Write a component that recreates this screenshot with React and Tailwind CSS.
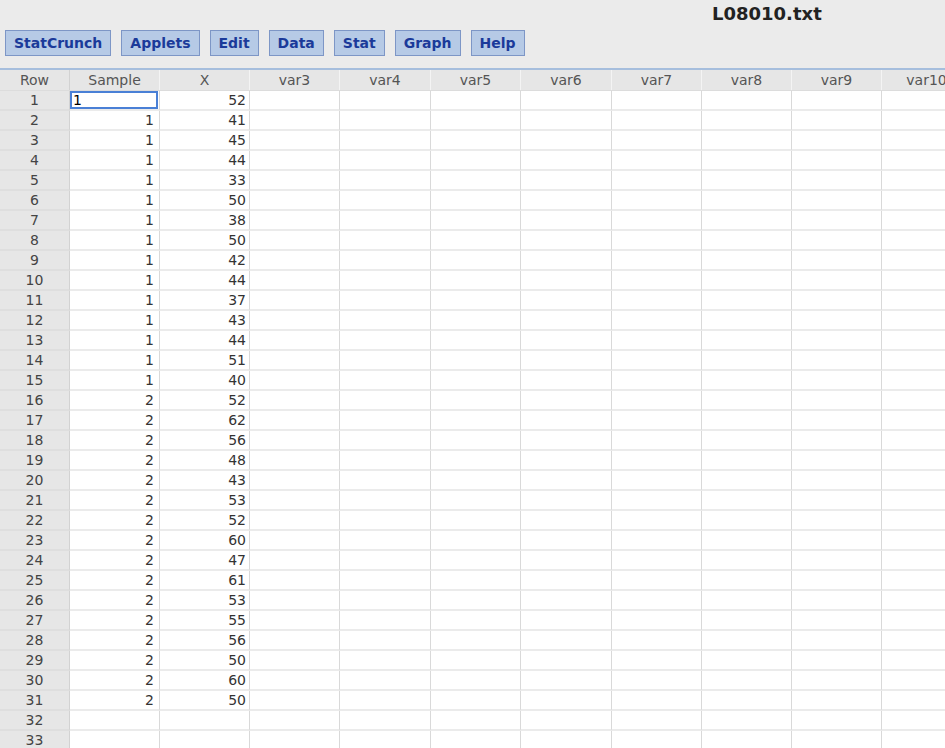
const menus = ["StatCrunch", "Applets", "Edit", "Data", "Stat", "Graph", "Help"];

const columns = [
  { name: "Row", width: "w-[70px]" },
  { name: "Sample", width: "w-[90px]" },
  { name: "X", width: "w-[90px]" },
  { name: "var3", width: "w-[90px]" },
  { name: "var4", width: "w-[91px]" },
  { name: "var5", width: "w-[90px]" },
  { name: "var6", width: "w-[91px]" },
  { name: "var7", width: "w-[90px]" },
  { name: "var8", width: "w-[90px]" },
  { name: "var9", width: "w-[90px]" },
  { name: "var10", width: "w-[90px]" },
];

const sample = [
  1, 1, 1, 1, 1, 1, 1, 1, 1, 1, 1, 1, 1, 1, 1,
  2, 2, 2, 2, 2, 2, 2, 2, 2, 2, 2, 2, 2, 2, 2, 2,
];

const xs = [
  52, 41, 45, 44, 33, 50, 38, 50, 42, 44, 37, 43, 44, 51, 40,
  52, 62, 56, 48, 43, 53, 52, 60, 47, 61, 53, 55, 56, 50, 60, 50,
];

const rows = Array.from({ length: 33 }, (_, i) => ({
  n: i + 1,
  sample: sample[i],
  x: xs[i],
}));

function MenuButton({ label }) {
  return (
    <button className="h-[26px] px-[8px] border border-[#7d96c6] bg-[#b6cae6] text-[#1b3a9a] font-bold text-[14px] leading-none">
      {label}
    </button>
  );
}

export default function App() {
  return (
    <div className="w-[945px] h-[748px] overflow-hidden bg-white font-['DejaVu_Sans',Verdana,sans-serif]">
      {/* toolbar */}
      <div className="h-[68px] bg-[#ebebeb] flex flex-col">
        <div className="h-[30px] flex items-start pt-[3px] pl-[712px]">
          <span className="text-[18px] font-bold text-[#222] leading-tight whitespace-nowrap">
            L08010.txt
          </span>
        </div>
        <div className="flex gap-[10px] pl-[5px]">
          {menus.map((m) => (
            <MenuButton key={m} label={m} />
          ))}
        </div>
      </div>
      <div className="h-[2px] bg-[#a6bedd]" />

      {/* grid */}
      <div className="flex h-[21px] bg-[#e6e6e6] text-[14px] text-[#555] border-b border-[#dcdcdc]">
        {columns.map((c, i) => (
          <div
            key={c.name}
            className={`${c.width} shrink-0 flex items-center justify-center whitespace-nowrap ${
              i === 0 ? "border-r border-[#d2d2d2]" : "border-r border-[#f4f4f4]"
            }`}
          >
            {c.name}
          </div>
        ))}
      </div>

      {rows.map((r) => (
        <div key={r.n} className="flex h-[20px] text-[14px] text-[#333]">
          <div className="w-[70px] shrink-0 bg-[#e6e6e6] border-r border-[#d2d2d2] border-b-2 border-b-[#dedede] flex items-center justify-center text-[#444]">
            {r.n}
          </div>
          {r.n === 1 ? (
            <div className="w-[90px] shrink-0 border-b-2 border-[#ebebeb] border-r border-r-[#d9d9d9]">
              <div className="h-full w-[88px] border-2 border-[#4a80d6] flex items-center pl-[1px] text-black leading-none">
                1
              </div>
            </div>
          ) : (
            <div className="w-[90px] shrink-0 border-b-2 border-[#ebebeb] border-r border-r-[#d9d9d9] flex items-center justify-end pr-[5px]">
              {r.sample}
            </div>
          )}
          <div className="w-[90px] shrink-0 border-b-2 border-[#ebebeb] border-r border-r-[#d9d9d9] flex items-center justify-end pr-[3px]">
            {r.x}
          </div>
          {columns.slice(3).map((c) => (
            <div
              key={c.name}
              className={`${c.width} shrink-0 border-b-2 border-[#ebebeb] border-r border-r-[#d9d9d9]`}
            />
          ))}
        </div>
      ))}
    </div>
  );
}
